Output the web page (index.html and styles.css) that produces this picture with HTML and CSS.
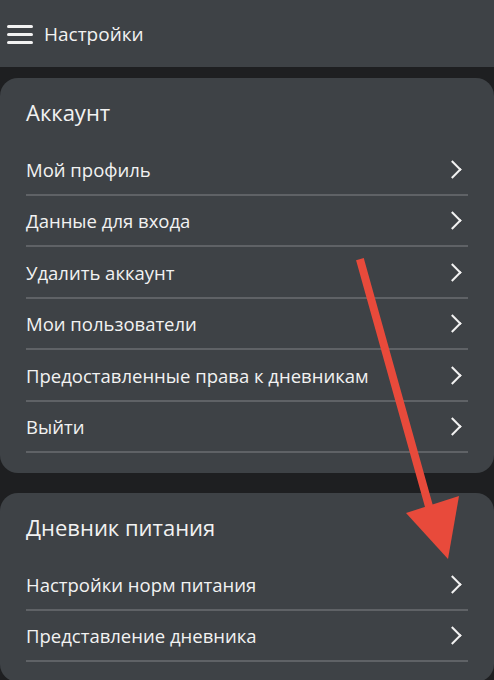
FILE: index.html
```html
<!DOCTYPE html>
<html lang="ru">
<head>
    <meta charset="UTF-8">
    <meta name="viewport" content="width=device-width, initial-scale=1.0">
    <title>Настройки</title>
    <link rel="stylesheet" href="styles.css">
</head>
<body>
    <header class="topbar">
        <svg class="menu-icon" width="26" height="20" viewBox="0 0 26 20">
            <rect x="0" y="1" width="26" height="3" rx="1.5" fill="#f2f2f2"/>
            <rect x="0" y="9" width="26" height="3" rx="1.5" fill="#f2f2f2"/>
            <rect x="0" y="17" width="26" height="3" rx="1.5" fill="#f2f2f2"/>
        </svg>
        <span class="topbar-title">Настройки</span>
    </header>

    <main class="content">
        <section class="card">
            <h2 class="card-title">Аккаунт</h2>
            <ul class="list">
                <li class="row"><span>Мой профиль</span><i class="chev"></i></li>
                <li class="row"><span>Данные для входа</span><i class="chev"></i></li>
                <li class="row"><span>Удалить аккаунт</span><i class="chev"></i></li>
                <li class="row"><span>Мои пользователи</span><i class="chev"></i></li>
                <li class="row"><span>Предоставленные права к дневникам</span><i class="chev"></i></li>
                <li class="row"><span>Выйти</span><i class="chev"></i></li>
            </ul>
        </section>

        <section class="card">
            <h2 class="card-title">Дневник питания</h2>
            <ul class="list">
                <li class="row"><span>Настройки норм питания</span><i class="chev"></i></li>
                <li class="row"><span>Представление дневника</span><i class="chev"></i></li>
            </ul>
        </section>
    </main>

    <!-- annotation arrow drawn over the screenshot -->
    <svg class="arrow" width="494" height="680" viewBox="0 0 494 680">
        <line x1="361" y1="263" x2="430" y2="510" stroke="#e84a3b" stroke-width="8" stroke-linecap="square"/>
        <polygon points="406,513 459,496 448,559" fill="#e84a3b"/>
    </svg>
</body>
</html>
```

FILE: styles.css
```css
body {
    margin: 0;
    background-color: #1e1f21;
    font-family: "Open Sans", "Noto Sans", sans-serif;
    color: #f2f2f2;
    height: 680px;
    overflow: hidden;
    position: relative;
}
.topbar {
    height: 67px;
    background-color: #3e4246;
    display: flex;
    align-items: center;
    padding-left: 7px;
    gap: 11px;
}
.menu-icon {
    display: block;
}
.topbar-title {
    font-size: 19px;
    font-weight: 500;
}
.content {
    padding-top: 11px;
    display: flex;
    flex-direction: column;
    gap: 20px;
}
.card {
    background-color: #3e4246;
    border-radius: 18px;
    padding: 20px 26px 20px 26px;
}
.card-title {
    margin: 0 0 18px 0;
    font-size: 22px;
    line-height: 28px;
    font-weight: 500;
}
.list {
    list-style: none;
    margin: 0;
    padding: 0;
}
.row {
    height: 51.5px;
    box-sizing: border-box;
    border-bottom: 2px solid #5f6266;
    display: flex;
    align-items: center;
    justify-content: space-between;
    font-size: 18.5px;
    font-weight: 500;
    padding-top: 1px;
}
.chev {
    width: 11px;
    height: 11px;
    border-right: 2.5px solid #f2f2f2;
    border-top: 2.5px solid #f2f2f2;
    transform: rotate(45deg);
    margin-right: 9px;
}
.arrow {
    position: absolute;
    left: 0;
    top: 0;
}
```
